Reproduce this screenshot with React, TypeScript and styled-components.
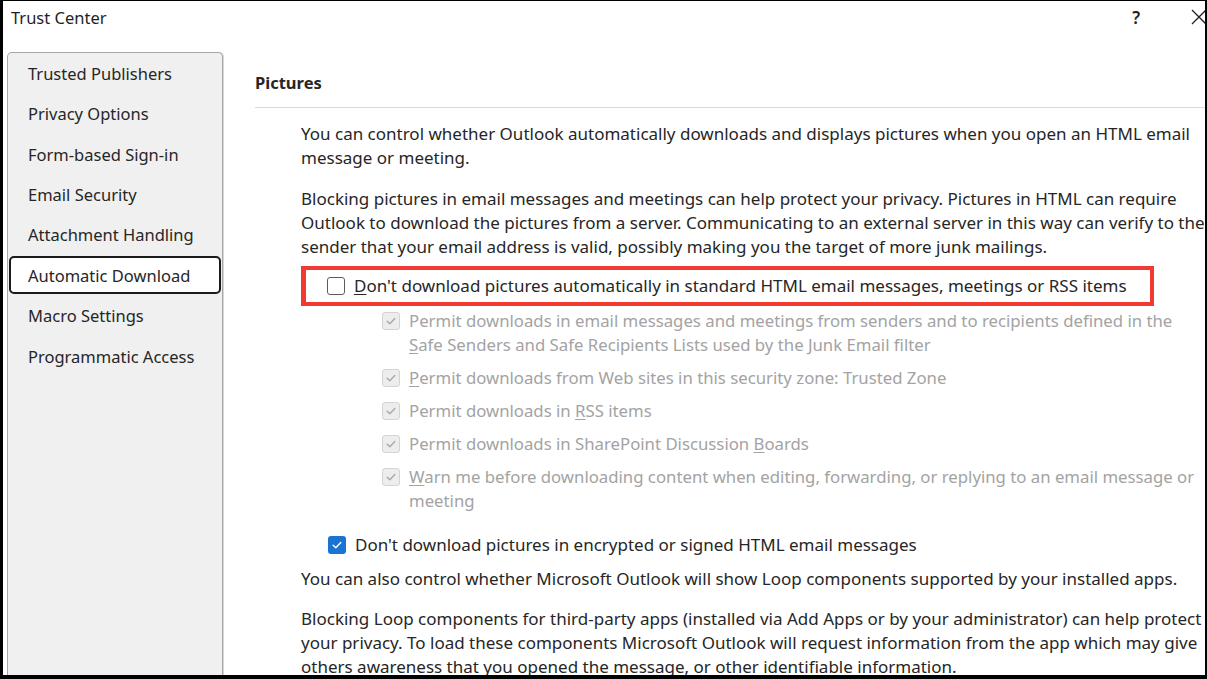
import React from "react";
import styled, { createGlobalStyle, css } from "styled-components";

const Global = createGlobalStyle`
  html, body { margin: 0; padding: 0; background: #000; }
  body { font-family: "Noto Sans", "Open Sans", sans-serif; color: #262626; }
  #root { width: 1207px; height: 679px; overflow: hidden; }
`;

const FONT = `"Noto Sans", "Open Sans", sans-serif`;

const Frame = styled.div`
  width: 1207px;
  height: 679px;
  box-sizing: border-box;
  padding: 1px 2px 4px 3px;
  background: #000;
`;

const Window = styled.div`
  width: 100%;
  height: 100%;
  background: #fff;
  overflow: hidden;
  display: flex;
  flex-direction: column;
`;

const TitleBar = styled.div`
  height: 34px;
  flex-shrink: 0;
  display: flex;
  align-items: center;
  padding-left: 8px;
  font-family: ${FONT};
  font-size: 16.5px;
  color: #1f1f1f;
`;

const Title = styled.div`
  flex: 1;
  margin-top: -2px;
`;

const TitleButtons = styled.div`
  display: flex;
  align-items: center;
  gap: 50px;
  margin-right: -3px;
  margin-top: -2px;
`;

const Help = styled.span`
  font-size: 17px;
  font-weight: 600;
  color: #222;
`;

const Body = styled.div`
  flex: 1;
  display: flex;
  margin-top: 17px;
  min-height: 0;
`;

const Sidebar = styled.nav`
  width: 216px;
  margin-left: 4px;
  flex-shrink: 0;
  box-sizing: border-box;
  background: #f0f0f0;
  border: 1px solid #a7a7a7;
  border-bottom: none;
  border-radius: 5px 5px 0 0;
  box-shadow: 1px 0 0 #d6d6d6;
  padding: 0 1px;
  display: flex;
  flex-direction: column;
`;

const NavItem = styled.div<{ $active?: boolean }>`
  height: 40.45px;
  flex-shrink: 0;
  display: flex;
  align-items: center;
  box-sizing: border-box;
  padding-left: 17px;
  font-family: ${FONT};
  font-size: 16.5px;
  color: #262626;
  border: 2px solid transparent;
  border-radius: 5px;
  ${(p) =>
    p.$active &&
    css`
      background: #fff;
      border-color: #1a1a1a;
      height: 38px;
      margin: 1px 0 1.45px;
    `}
`;

const Content = styled.main`
  flex: 1;
  padding-left: 32px;
  display: flex;
  flex-direction: column;
  font-family: ${FONT};
  font-size: 17px;
  line-height: 24px;
  color: #262626;
  & > * {
    flex-shrink: 0;
  }
`;

const SectionTitle = styled.h2`
  margin: 19px 0 0 0;
  font-size: 16.5px;
  line-height: 24px;
  font-weight: 700;
  color: #262626;
`;

const Rule = styled.hr`
  margin: 12px 0 0 0;
  border: none;
  border-top: 1px solid #dadada;
`;

const Para = styled.p<{ $top: number }>`
  margin: ${(p) => p.$top}px 0 0 46px;
`;

const OptionRow = styled.label<{ $indent: number; $top: number; $disabled?: boolean }>`
  display: flex;
  align-items: flex-start;
  gap: 9px;
  margin: ${(p) => p.$top}px 0 0 ${(p) => p.$indent}px;
  color: ${(p) => (p.$disabled ? "#a3a3a3" : "#262626")};
  font-size: ${(p) => (p.$disabled ? "16.75px" : "17px")};
`;

const Highlight = styled.div`
  margin: 7px 51px 0 46px;
  border: 4px solid #f23a33;
  border-left-width: 5px;
  height: 40px;
  box-sizing: border-box;
  display: flex;
  align-items: center;
  padding-left: 21px;
`;

const Box = styled.span<{ $state: "off" | "disabled" | "on" }>`
  width: 18px;
  height: 18px;
  flex-shrink: 0;
  box-sizing: border-box;
  border-radius: 3px;
  margin-top: 3px;
  display: flex;
  align-items: center;
  justify-content: center;
  ${(p) =>
    p.$state === "off" &&
    css`
      border: 1px solid #5c5c5c;
      background: #fff;
    `}
  ${(p) =>
    p.$state === "disabled" &&
    css`
      border: 1px solid #d4d4d4;
      background: #ededed;
    `}
  ${(p) =>
    p.$state === "on" &&
    css`
      background: #1a74d4;
    `}
`;

const U = styled.span`
  text-decoration: underline;
  text-underline-offset: 2px;
  text-decoration-thickness: 1px;
`;

const Check = ({ color }: { color: string }) => (
  <svg width="12" height="12" viewBox="0 0 12 12">
    <path d="M2.2 6.2 L4.8 8.7 L9.8 3.4" fill="none" stroke={color} strokeWidth="1.4" strokeLinecap="round" strokeLinejoin="round" />
  </svg>
);

const CloseIcon = () => (
  <svg width="18" height="18" viewBox="0 0 18 18">
    <path d="M2 2 L16 16 M16 2 L2 16" stroke="#222" strokeWidth="1.3" />
  </svg>
);

const nav = [
  "Trusted Publishers",
  "Privacy Options",
  "Form-based Sign-in",
  "Email Security",
  "Attachment Handling",
  "Automatic Download",
  "Macro Settings",
  "Programmatic Access",
];

export default function App() {
  return (
    <>
      <Global />
      <Frame>
        <Window>
          <TitleBar>
            <Title>Trust Center</Title>
            <TitleButtons>
              <Help>?</Help>
              <CloseIcon />
            </TitleButtons>
          </TitleBar>
          <Body>
            <Sidebar>
              {nav.map((n) => (
                <NavItem key={n} $active={n === "Automatic Download"}>
                  {n}
                </NavItem>
              ))}
            </Sidebar>
            <Content>
              <SectionTitle>Pictures</SectionTitle>
              <Rule />
              <Para $top={14}>
                You can control whether Outlook automatically downloads and displays pictures when you open an HTML email message or meeting.
              </Para>
              <Para $top={17}>
                Blocking pictures in email messages and meetings can help protect your privacy. Pictures in HTML can require Outlook to download the pictures from a server. Communicating to an external server in this way can verify to the sender that your email address is valid, possibly making you the target of more junk mailings.
              </Para>
              <Highlight>
                <OptionRow $indent={0} $top={0}>
                  <Box $state="off" />
                  <span>
                    <U>D</U>on't download pictures automatically in standard HTML email messages, meetings or RSS items
                  </span>
                </OptionRow>
              </Highlight>
              <OptionRow $indent={127} $top={3} $disabled>
                <Box $state="disabled">
                  <Check color="#a8a8a8" />
                </Box>
                <span>
                  Permit downloads in email messages and meetings from senders and to recipients defined in the <U>S</U>afe Senders and Safe Recipients Lists used by the Junk Email filter
                </span>
              </OptionRow>
              <OptionRow $indent={127} $top={9} $disabled>
                <Box $state="disabled">
                  <Check color="#a8a8a8" />
                </Box>
                <span>
                  <U>P</U>ermit downloads from Web sites in this security zone: Trusted Zone
                </span>
              </OptionRow>
              <OptionRow $indent={127} $top={9} $disabled>
                <Box $state="disabled">
                  <Check color="#a8a8a8" />
                </Box>
                <span>
                  Permit downloads in <U>R</U>SS items
                </span>
              </OptionRow>
              <OptionRow $indent={127} $top={9} $disabled>
                <Box $state="disabled">
                  <Check color="#a8a8a8" />
                </Box>
                <span>
                  Permit downloads in SharePoint Discussion <U>B</U>oards
                </span>
              </OptionRow>
              <OptionRow $indent={127} $top={9} $disabled>
                <Box $state="disabled">
                  <Check color="#a8a8a8" />
                </Box>
                <span>
                  <U>W</U>arn me before downloading content when editing, forwarding, or replying to an email message or meeting
                </span>
              </OptionRow>
              <OptionRow $indent={73} $top={20}>
                <Box $state="on">
                  <Check color="#fff" />
                </Box>
                <span>Don't download pictures in encrypted or signed HTML email messages</span>
              </OptionRow>
              <Para $top={10}>
                You can also control whether Microsoft Outlook will show Loop components supported by your installed apps.
              </Para>
              <Para $top={16}>
                Blocking Loop components for third-party apps (installed via Add Apps or by your administrator) can help protect your privacy. To load these components Microsoft Outlook will request information from the app which may give others awareness that you opened the message, or other identifiable information.
              </Para>
            </Content>
          </Body>
        </Window>
      </Frame>
    </>
  );
}
